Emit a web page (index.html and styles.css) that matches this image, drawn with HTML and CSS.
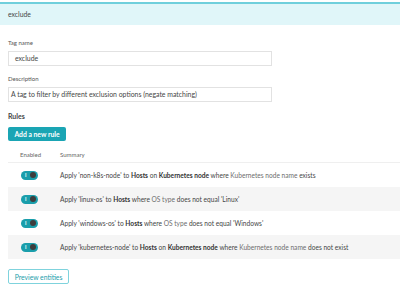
FILE: index.html
```html
<!DOCTYPE html>
<html>
<head>
<meta charset="utf-8">
<link rel="stylesheet" href="styles.css">
</head>
<body>
<div class="topbar">exclude</div>
<div class="content">
  <div class="field">
    <div class="label">Tag name</div>
    <div class="input">exclude</div>
  </div>
  <div class="field">
    <div class="label">Description</div>
    <div class="input input-long">A tag to filter by different exclusion options (negate matching)</div>
  </div>
  <div class="section-title">Rules</div>
  <button class="btn-primary">Add a new rule</button>
  <div class="table">
    <div class="row head"><div class="c1">Enabled</div><div class="c2">Summary</div></div>
    <div class="row">
      <div class="c1"><span class="toggle"><span class="bar">I</span><span class="knob"></span></span></div>
      <div class="c2">Apply 'non-k8s-node' to <b>Hosts</b> on <b>Kubernetes node</b> where <span class="attr">Kubernetes node name</span> exists</div>
    </div>
    <div class="row alt">
      <div class="c1"><span class="toggle"><span class="bar">I</span><span class="knob"></span></span></div>
      <div class="c2">Apply 'linux-os' to <b>Hosts</b> where <span class="attr">OS type</span> does not equal 'Linux'</div>
    </div>
    <div class="row">
      <div class="c1"><span class="toggle"><span class="bar">I</span><span class="knob"></span></span></div>
      <div class="c2">Apply 'windows-os' to <b>Hosts</b> where <span class="attr">OS type</span> does not equal 'Windows'</div>
    </div>
    <div class="row alt">
      <div class="c1"><span class="toggle"><span class="bar">I</span><span class="knob"></span></span></div>
      <div class="c2">Apply 'kubernetes-node' to <b>Hosts</b> on <b>Kubernetes node</b> where <span class="attr">Kubernetes node name</span> does not exist</div>
    </div>
  </div>
  <button class="btn-secondary">Preview entities</button>
</div>
</body>
</html>
```
FILE: styles.css
```css
html, body {
  margin: 0;
  padding: 0;
  background: #ffffff;
}
body {
  font-family: Lato, "Open Sans", sans-serif;
  font-size: 7px;
  color: #454646;
}
.topbar {
  margin-top: 2px;
  border-top: 2px solid #6fcfdc;
  background: #e0f6f9;
  height: 21px;
  line-height: 21px;
  padding-left: 8px;
  font-size: 6.8px;
  color: #454646;
}
.content {
  padding: 0 0 0 8px;
  display: flex;
  flex-direction: column;
  align-items: flex-start;
}
.field {
  display: flex;
  flex-direction: column;
}
.field:first-child {
  margin-top: 14px;
}
.field + .field {
  margin-top: 9px;
}
.label {
  font-size: 6px;
  line-height: 8px;
  color: #555;
  margin-bottom: 4px;
}
.input {
  width: 256px;
  height: 13px;
  line-height: 13px;
  border: 1px solid #e2e2e2;
  padding: 0 0 0 6px;
  font-size: 6.9px;
  color: #454646;
}
.input-long {
  width: 260px;
  padding-left: 2px;
}
.section-title {
  margin-top: 10px;
  font-size: 7px;
  font-weight: 700;
  color: #454646;
  line-height: 8px;
}
.btn-primary {
  margin-top: 7px;
  border: none;
  border-radius: 2px;
  background: #1aa5b4;
  color: #ffffff;
  font-family: inherit;
  font-size: 6.8px;
  font-weight: 700;
  height: 14px;
  width: 58px;
  padding: 0;
}
.table {
  margin-top: 5px;
  width: 392px;
  display: flex;
  flex-direction: column;
}
.row {
  display: flex;
  align-items: center;
  height: 24px;
  font-size: 6.6px;
}
.row.head {
  height: 16px;
  border-bottom: 1px solid #efefef;
  font-size: 6px;
  color: #666;
}
.row.alt {
  background: #f5f5f5;
}
.c1 {
  width: 40px;
  padding-left: 12px;
  display: flex;
  align-items: center;
}
.c2 {
  flex: 1;
  white-space: nowrap;
}
.c2 b {
  color: #333;
  font-weight: 700;
}
.attr {
  color: #6e6e6e;
}
.toggle {
  margin-left: 1px;
  position: relative;
  display: inline-block;
  width: 17px;
  height: 9px;
  border-radius: 5px;
  background: #1a9eab;
}
.toggle .bar {
  position: absolute;
  left: 4px;
  top: 0;
  line-height: 9px;
  font-size: 5px;
  color: #ffffff;
  font-weight: 700;
}
.toggle .knob {
  position: absolute;
  right: 2px;
  top: 1.5px;
  width: 6px;
  height: 6px;
  border-radius: 50%;
  background: #3d3d3d;
}
.btn-secondary {
  margin-top: 10px;
  background: #ffffff;
  border: 1px solid #7fd3dd;
  border-radius: 2px;
  color: #1a9eab;
  font-family: inherit;
  font-size: 6.8px;
  height: 15px;
  width: 61px;
  padding: 0;
}
```
